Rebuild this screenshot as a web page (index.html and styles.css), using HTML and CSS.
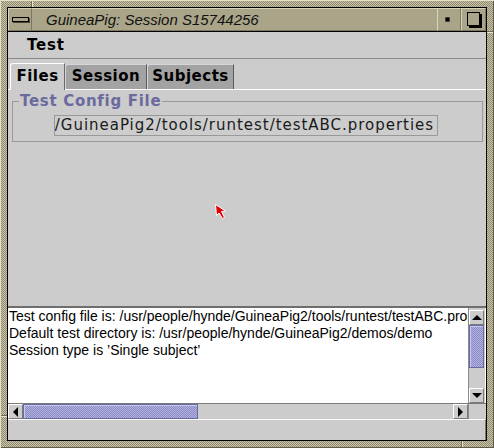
FILE: index.html
```html
<!DOCTYPE html>
<html>
<head>
<meta charset="utf-8">
<link rel="stylesheet" href="styles.css">
</head>
<body>
<div class="screen">
  <div class="win">
    <div class="titlebar">
      <div class="tb-btn tb-menu"><span class="bar"></span></div>
      <div class="title">GuineaPig: Session S15744256</div>
      <div class="tb-btn tb-min"><span class="dot"></span></div>
      <div class="tb-btn tb-max"><span class="sq"></span></div>
    </div>
    <div class="menubar"><span class="menu-item">Test</span></div>
    <div class="tabs">
      <div class="tab tab-files active">Files</div>
      <div class="tab tab-session">Session</div>
      <div class="tab tab-subjects">Subjects</div>
    </div>
    <div class="panel">
      <fieldset class="group">
        <legend>Test Config File</legend>
        <div class="field"><span>/usr/people/hynde/GuineaPig2/tools/runtest/testABC.properties</span></div>
      </fieldset>
      <svg class="cursor" width="14" height="18" viewBox="0 0 14 18">
        <path d="M1.5 1.5 L2.5 12.5 L5 10 L8.5 15.5 L10.5 14.5 L7.5 8.5 L11.5 8 Z" fill="#e00000" stroke="#ffffff" stroke-width="1"/>
      </svg>
    </div>
    <div class="log">
      <div class="log-row">
        <div class="log-text">
          <div>Test config file is: /usr/people/hynde/GuineaPig2/tools/runtest/testABC.properties</div>
          <div>Default test directory is: /usr/people/hynde/GuineaPig2/demos/demo</div>
          <div>Session type is ’Single subject’</div>
        </div>
        <div class="vscroll">
          <div class="sbtn"><span class="tri-up"></span></div>
          <div class="thumb vthumb"></div>
          <div class="track"></div>
          <div class="sbtn"><span class="tri-down"></span></div>
        </div>
      </div>
      <div class="hscroll">
        <div class="sbtn"><span class="tri-left"></span></div>
        <div class="thumb hthumb"></div>
        <div class="track"></div>
        <div class="sbtn"><span class="tri-right"></span></div>
        <div class="corner"></div>
      </div>
    </div>
    <div class="footer"></div>
  </div>
</div>
</body>
</html>
```
FILE: styles.css
```css
html, body {
  margin: 0;
  padding: 0;
  background: #cccccc;
}

.screen {
  width: 494px;
  height: 448px;
  box-sizing: border-box;
  padding: 7px;
  background-color: #aaa589;
  background-image:
    linear-gradient(#ebe7cf, #ebe7cf), linear-gradient(#6f6a55, #6f6a55),
    linear-gradient(#ebe7cf, #ebe7cf), linear-gradient(#6f6a55, #6f6a55),
    linear-gradient(#ebe7cf, #ebe7cf), linear-gradient(#6f6a55, #6f6a55),
    linear-gradient(#ebe7cf, #ebe7cf), linear-gradient(#6f6a55, #6f6a55),
    repeating-conic-gradient(#c9c4a9 0 25%, #8f8a70 0 50%);
  background-size:
    1px 7px, 1px 7px,
    1px 7px, 1px 7px,
    7px 1px, 7px 1px,
    7px 1px, 7px 1px,
    2px 2px;
  background-position:
    32px 0, 31px 0,
    462px 441px, 461px 441px,
    487px 32px, 487px 31px,
    0 416px, 0 415px,
    0 0;
  background-repeat: no-repeat, no-repeat, no-repeat, no-repeat, no-repeat, no-repeat, no-repeat, no-repeat, repeat;
  box-shadow: inset 1px 1px 0 #e4e0c8, inset -1px -1px 0 #5f5a46;
}

.win {
  height: 434px;
  box-sizing: border-box;
  border: 1px solid #000;
  background: #cccccc;
  display: flex;
  flex-direction: column;
}

/* ---------- title bar ---------- */
.titlebar {
  height: 24px;
  box-sizing: border-box;
  border-bottom: 1px solid #000;
  background: #aaa589;
  display: flex;
  align-items: stretch;
}

.tb-btn {
  box-sizing: border-box;
  border: 1px solid;
  border-color: #d8d4bb #7d7861 #7d7861 #d8d4bb;
  display: flex;
  align-items: center;
  justify-content: center;
}

.tb-menu {
  width: 24px;
}

.bar {
  width: 17px;
  height: 5px;
  box-sizing: border-box;
  border: 1px solid #000;
  background: #aaa589;
  box-shadow: 1px 1px 0 #4a4638;
}

.title {
  flex: 1;
  padding-left: 14px;
  font-family: "Liberation Sans", Arial, sans-serif;
  font-style: italic;
  font-size: 15px;
  line-height: 22px;
  color: #111;
  border-top: 1px solid #d8d4bb;
  border-bottom: 1px solid #7d7861;
  box-sizing: border-box;
  white-space: nowrap;
}

.tb-min {
  width: 24px;
}

.dot {
  width: 3px;
  height: 3px;
  background: #000;
  border: 1px solid #3a3a2a;
  border-radius: 1px;
  margin-right: 3px;
}

.tb-max {
  width: 25px;
  padding-left: 1px;
}

.sq {
  width: 13px;
  height: 14px;
  box-sizing: border-box;
  border: 1px solid #000;
  box-shadow: 2px 2px 0 #000;
  margin-right: 2px;
  margin-bottom: 2px;
}

/* ---------- menu ---------- */
.menubar {
  height: 27px;
  box-sizing: border-box;
  border-bottom: 1px solid #8a8a8a;
  padding-left: 19px;
  display: flex;
  align-items: center;
}

.menu-item {
  font-family: "DejaVu Sans", sans-serif;
  font-weight: bold;
  font-size: 15px;
  letter-spacing: 0.8px;
  color: #000;
}

/* ---------- tabs ---------- */
.tabs {
  height: 30px;
  box-sizing: border-box;
  padding: 4px 0 0 2px;
  display: flex;
  align-items: flex-end;
}

.tab {
  height: 25px;
  box-sizing: border-box;
  background: #a3a3a3;
  border-top: 1px solid #d6d6d6;
  border-left: 1px solid #d6d6d6;
  border-right: 1px solid #5a5a5a;
  font-family: "DejaVu Sans", sans-serif;
  font-weight: bold;
  font-size: 15px;
  letter-spacing: 0.5px;
  line-height: 23px;
  text-align: center;
  color: #000;
  border-top-left-radius: 3px;
}

.tab.active {
  height: 27px;
  margin-bottom: -1px;
  background: #cccccc;
  border-top: 1px solid #ffffff;
  border-left: 1px solid #ffffff;
  border-right: 1px solid #6a6a6a;
  line-height: 25px;
  position: relative;
  z-index: 1;
}

.tab-files { width: 55px; }
.tab-session { width: 82px; }
.tab-subjects { width: 87px; }

/* ---------- panel ---------- */
.panel {
  flex: 1;
  border-top: 1px solid #ffffff;
  padding: 2px 3px 0 4px;
  position: relative;
}

.group {
  margin: 0;
  padding: 0 0 5px 0;
  border: 1px solid #9a9a9a;
  min-width: 0;
}

.group legend {
  margin-left: 6px;
  padding: 0 1px;
  font-family: "DejaVu Sans", sans-serif;
  font-weight: bold;
  font-size: 15px;
  letter-spacing: 0.7px;
  line-height: 18px;
  color: #6a6a9e;
}

.field {
  margin: 5px 0 0 41px;
  width: 384px;
  height: 21px;
  box-sizing: border-box;
  border: 1px solid #999999;
  background: #cdcdcd;
  display: flex;
  justify-content: flex-end;
  overflow: hidden;
  padding-right: 3px;
  font-family: "DejaVu Sans", sans-serif;
  font-size: 15px;
  letter-spacing: 0.97px;
  line-height: 19px;
  color: #1a1a1a;
  white-space: nowrap;
}

.cursor {
  position: absolute;
  left: 206px;
  top: 113px;
}

/* ---------- log ---------- */
.log {
  border-top: 2px solid #6e6e6e;
  display: flex;
  flex-direction: column;
}

.log-row {
  height: 95px;
  display: flex;
  background: #ffffff;
}

.log-text {
  flex: 1;
  min-width: 0;
  overflow: hidden;
  white-space: nowrap;
  padding: 0 0 0 1px;
  font-family: "Liberation Sans", Arial, sans-serif;
  font-size: 14px;
  line-height: 17px;
  color: #000;
}

.vscroll {
  width: 17px;
  margin-right: 1px;
  padding-top: 2px;
  display: flex;
  flex-direction: column;
  background: #cccccc;
  border-left: 1px solid #8a8a8a;
  box-sizing: border-box;
}

.sbtn {
  width: 15px;
  height: 15px;
  flex: none;
  box-sizing: border-box;
  background: #cccccc;
  border: 1px solid;
  border-color: #ffffff #7a7a7a #7a7a7a #ffffff;
  display: flex;
  align-items: center;
  justify-content: center;
}

.track {
  flex: 1;
  background: #cccccc;
}

.thumb {
  box-sizing: border-box;
  border: 1px solid #6a6aa2;
  box-shadow: inset 1px 1px 0 #c8c8f0;
  background-color: #9c9cd2;
  background-image: repeating-conic-gradient(#b2b2e2 0 25%, #8c8cc4 0 50%);
  background-size: 2px 2px;
}

.vthumb {
  height: 43px;
  width: 15px;
}

.hthumb {
  width: 175px;
  height: 15px;
}

.tri-up {
  border-left: 5px solid transparent;
  border-right: 5px solid transparent;
  border-bottom: 5px solid #000;
}

.tri-down {
  border-left: 5px solid transparent;
  border-right: 5px solid transparent;
  border-top: 5px solid #000;
}

.tri-left {
  border-top: 5px solid transparent;
  border-bottom: 5px solid transparent;
  border-right: 5px solid #000;
}

.tri-right {
  border-top: 5px solid transparent;
  border-bottom: 5px solid transparent;
  border-left: 5px solid #000;
}

.hscroll {
  height: 16px;
  box-sizing: border-box;
  border-top: 1px solid #7a7a7a;
  display: flex;
  background: #cccccc;
}

.corner {
  width: 16px;
  border-left: 1px solid #8a8a8a;
  margin-right: 1px;
}

.footer {
  height: 21px;
  box-sizing: border-box;
  border-top: 1px solid #ffffff;
  border-right: 1px solid #7a7a7a;
}
```
